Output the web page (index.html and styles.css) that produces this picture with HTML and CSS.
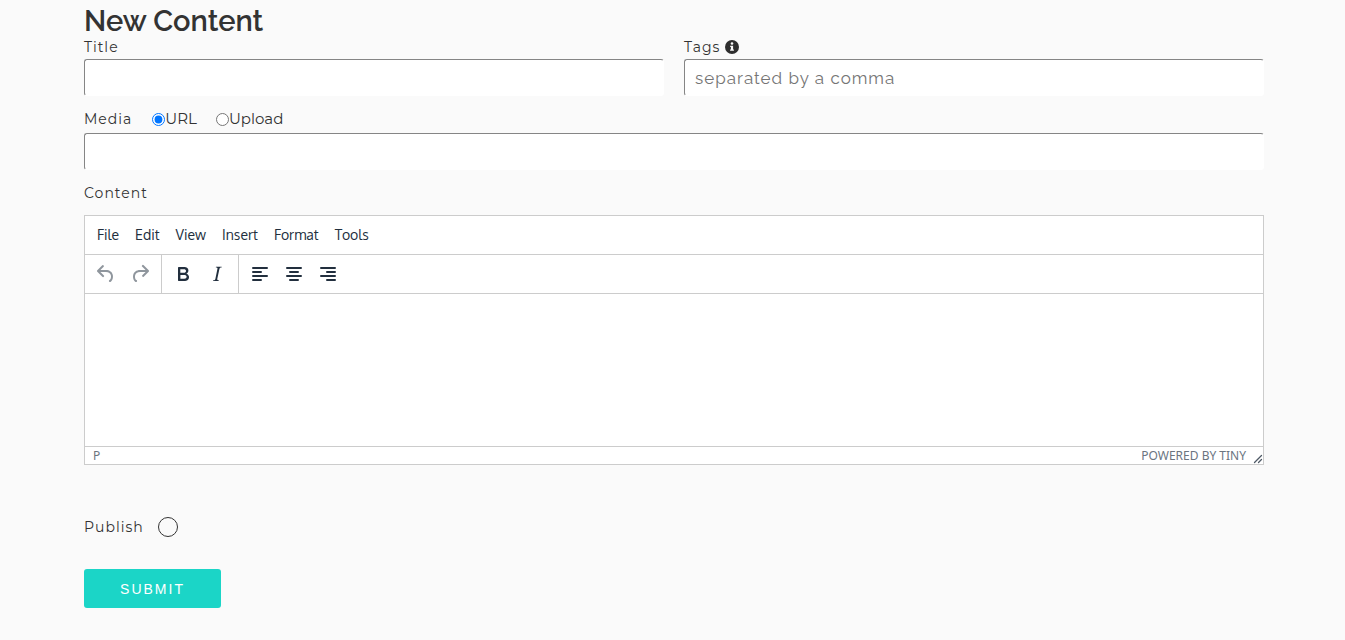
FILE: index.html
```html
<!DOCTYPE html>
<html lang="en">
<head>
<meta charset="utf-8">
<title>New Content</title>
<link rel="stylesheet" href="styles.css">
</head>
<body>
<form class="page">
  <h1 class="heading">New Content</h1>
  <div class="columns">
    <div class="field">
      <label class="label" for="title">Title</label>
      <input class="text-input" id="title" type="text">
    </div>
    <div class="field">
      <label class="label" for="tags">Tags
        <svg class="info" viewBox="0 0 14 14" aria-hidden="true"><circle cx="7" cy="7" r="7" fill="#2e2e2e"/><circle cx="7" cy="3.5" r="1.3" fill="#fafafa"/><path d="M5.2 5.7h2.9v3.7h.8v1.4H5.1V9.4h.8V7.1h-.7z" fill="#fafafa"/></svg>
      </label>
      <input class="text-input" id="tags" type="text" placeholder="separated by a comma">
    </div>
  </div>
  <div class="field media">
    <div class="media-row">
      <label class="label media-label" for="media">Media</label>
      <label class="choice"><input class="radio" type="radio" name="source" checked>URL</label>
      <label class="choice"><input class="radio" type="radio" name="source">Upload</label>
    </div>
    <input class="text-input" id="media" type="text">
  </div>
  <label class="label content-label" for="content">Content</label>
  <div class="editor">
    <div class="menubar">
      <button class="menu" type="button">File</button>
      <button class="menu" type="button">Edit</button>
      <button class="menu" type="button">View</button>
      <button class="menu" type="button">Insert</button>
      <button class="menu" type="button">Format</button>
      <button class="menu" type="button">Tools</button>
    </div>
    <div class="toolbar">
      <div class="group">
        <button class="tool" type="button" aria-label="Undo" disabled><svg class="icon" viewBox="0 0 24 24"><path d="M6.4 8H12c3.7 0 6.2 2 6.8 5.1.6 2.7-.4 5.6-2.3 6.8a1 1 0 0 1-1-1.8c1.1-.6 1.8-2.7 1.4-4.6-.5-2.1-2.1-3.5-4.9-3.5H6.4l3.3 3.3a1 1 0 1 1-1.4 1.4l-5-5a1 1 0 0 1 0-1.4l5-5a1 1 0 0 1 1.4 1.4L6.4 8z"/></svg></button>
        <button class="tool" type="button" aria-label="Redo" disabled><svg class="icon" viewBox="0 0 24 24"><path d="M17.6 10H12c-2.8 0-4.4 1.4-4.9 3.5-.4 2 .3 4 1.4 4.6a1 1 0 1 1-1 1.8c-2-1.2-2.9-4.1-2.3-6.8.6-3 3-5.1 6.8-5.1h5.6l-3.3-3.3a1 1 0 1 1 1.4-1.4l5 5a1 1 0 0 1 0 1.4l-5 5a1 1 0 0 1-1.4-1.4l3.3-3.3z"/></svg></button>
      </div>
      <div class="group">
        <button class="tool" type="button" aria-label="Bold"><svg class="icon" viewBox="0 0 24 24"><path fill-rule="evenodd" d="M7.8 19c-.3 0-.5 0-.6-.2l-.2-.5V5.7c0-.2 0-.4.2-.5l.6-.2h5c1.5 0 2.7.3 3.5 1 .7.6 1.1 1.4 1.1 2.5a3 3 0 0 1-.6 1.9c-.4.6-1 1-1.6 1.2.4.1.9.3 1.3.6s.8.7 1 1.2c.4.4.5 1 .5 1.6 0 1.3-.4 2.3-1.3 3-.8.7-2.1 1-3.8 1H7.8zm5-8.3c.6 0 1.2-.1 1.6-.5.4-.3.6-.7.6-1.3 0-1.1-.8-1.7-2.3-1.7H9.3v3.5h3.4zm.5 6c.7 0 1.3-.1 1.7-.4.4-.4.6-.9.6-1.5s-.2-1-.7-1.4c-.4-.3-1-.4-2-.4H9.4v3.8h4z"/></svg></button>
        <button class="tool" type="button" aria-label="Italic"><svg class="icon" viewBox="0 0 24 24"><path d="M16.7 4.7l-.1.9h-.3c-.6 0-1 0-1.4.3-.3.3-.4.6-.5 1.1l-2.1 9.8v.6c0 .5.4.8 1.4.8h.2l-.2.8H8l.2-.8h.2c1.1 0 1.8-.5 2-1.5l2-9.8.1-.5c0-.6-.4-.8-1.4-.8h-.3l.2-.9h5.8z"/></svg></button>
      </div>
      <div class="group">
        <button class="tool" type="button" aria-label="Align left"><svg class="icon lines" viewBox="0 0 24 24"><path d="M5 6h14M5 10h8M5 14h14M5 18h8"/></svg></button>
        <button class="tool" type="button" aria-label="Align center"><svg class="icon lines" viewBox="0 0 24 24"><path d="M5 6h14M8 10h8M5 14h14M8 18h8"/></svg></button>
        <button class="tool" type="button" aria-label="Align right"><svg class="icon lines" viewBox="0 0 24 24"><path d="M5 6h14M11 10h8M5 14h14M11 18h8"/></svg></button>
      </div>
    </div>
    <textarea class="writing" id="content"></textarea>
    <div class="statusbar">
      <span>P</span>
      <a class="brand" href="#">POWERED BY TINY</a>
      <svg class="grip" viewBox="0 0 10 10" aria-hidden="true"><path d="M1.500 8.500l7-7M5.500 8.500l3-3"/></svg>
    </div>
  </div>
  <div class="publish">
    <label class="label" for="publish">Publish</label>
    <input class="round-check" id="publish" type="checkbox">
  </div>
  <button class="submit" type="submit">SUBMIT</button>
</form>
</body>
</html>
```
FILE: styles.css
```css
* { box-sizing: border-box; }
body {
  margin: 0;
  background: #fafafa;
  color: #333;
  font-family: Montserrat, Inter, "Open Sans", sans-serif;
  font-size: 15px;
}
.page { padding: 3px 81px 32px 84px; }
.heading {
  margin: 0;
  font: 600 29px/36px Raleway, Lato, sans-serif;
}
.columns { display: grid; grid-template-columns: 1fr 1fr; gap: 20px; }
.field { display: flex; flex-direction: column; }
.label {
  display: flex;
  align-items: center;
  gap: 5px;
  height: 20px;
  font-size: 14px;
  line-height: 20px;
  letter-spacing: 1px;
}
.columns .label { height: 16px; margin-bottom: 4px; }
.info { width: 14px; height: 14px; }
.text-input {
  width: 100%;
  height: 37px;
  padding: 0 10px;
  border: 1px solid #fff;
  border-top-color: #858585;
  border-left-color: #858585;
  border-radius: 3px;
  background: #fff;
  color: #333;
  font: 17px Raleway, Lato, sans-serif;
  letter-spacing: 1px;
}
.text-input::placeholder { color: #757575; }
.media { margin-top: 13px; }
.media-row { display: flex; align-items: center; height: 20px; margin-bottom: 4px; }
.media-label { margin-right: 20px; }
.choice { display: flex; align-items: center; margin-right: 19px; line-height: 20px; }
.radio { width: 13px; height: 13px; margin: 0; }
.content-label { margin-top: 13px; }
.editor {
  margin-top: 12px;
  border: 1px solid #ccc;
  background: #fff;
  color: #222f3e;
}
.menubar { display: flex; height: 39px; padding: 0 4px; align-items: center; border-bottom: 1px solid #ccc; }
.menu {
  padding: 0 8px;
  border: 0;
  background: none;
  color: inherit;
  font: 14px/28px Oxygen, Cantarell, "Noto Sans", sans-serif;
}
.toolbar { display: flex; height: 39px; border-bottom: 1px solid #ccc; }
.group { display: flex; align-items: center; padding: 0 4px; border-right: 1px solid #ccc; }
.group:last-child { border-right: 0; }
.tool {
  display: flex;
  align-items: center;
  justify-content: center;
  width: 34px;
  height: 34px;
  padding: 0;
  border: 0;
  background: none;
}
.icon { width: 24px; height: 24px; fill: #222f3e; }
.tool:disabled .icon { opacity: .5; }
.lines { fill: none; stroke: #222f3e; stroke-width: 2; stroke-linecap: round; }
.writing {
  display: block;
  width: 100%;
  height: 152px;
  padding: 16px;
  border: 0;
  outline: 0;
  resize: none;
  background: #fff;
}
.statusbar {
  display: flex;
  align-items: center;
  height: 18px;
  padding-left: 8px;
  border-top: 1px solid #ccc;
  color: #6b747f;
  font: 12px/17px "Noto Sans", sans-serif;
}
.brand { margin-left: auto; color: inherit; text-decoration: none; }
.grip { width: 10px; height: 10px; margin-left: 7px; align-self: flex-end; fill: none; stroke: #4e5965; stroke-width: 1.3; stroke-linecap: round; }
.publish { display: flex; align-items: center; gap: 14px; margin-top: 52px; }
.round-check {
  appearance: none;
  width: 20px;
  height: 20px;
  margin: 0;
  border: 1px solid #333;
  border-radius: 50%;
}
.submit {
  display: block;
  min-width: 137px;
  height: 39px;
  margin-top: 32px;
  padding: 0 35px;
  border: 0;
  border-radius: 3px;
  background: #1bd5c7;
  color: #fff;
  font: 14px "Liberation Sans", Arial, sans-serif;
  letter-spacing: 2px;
}
```
